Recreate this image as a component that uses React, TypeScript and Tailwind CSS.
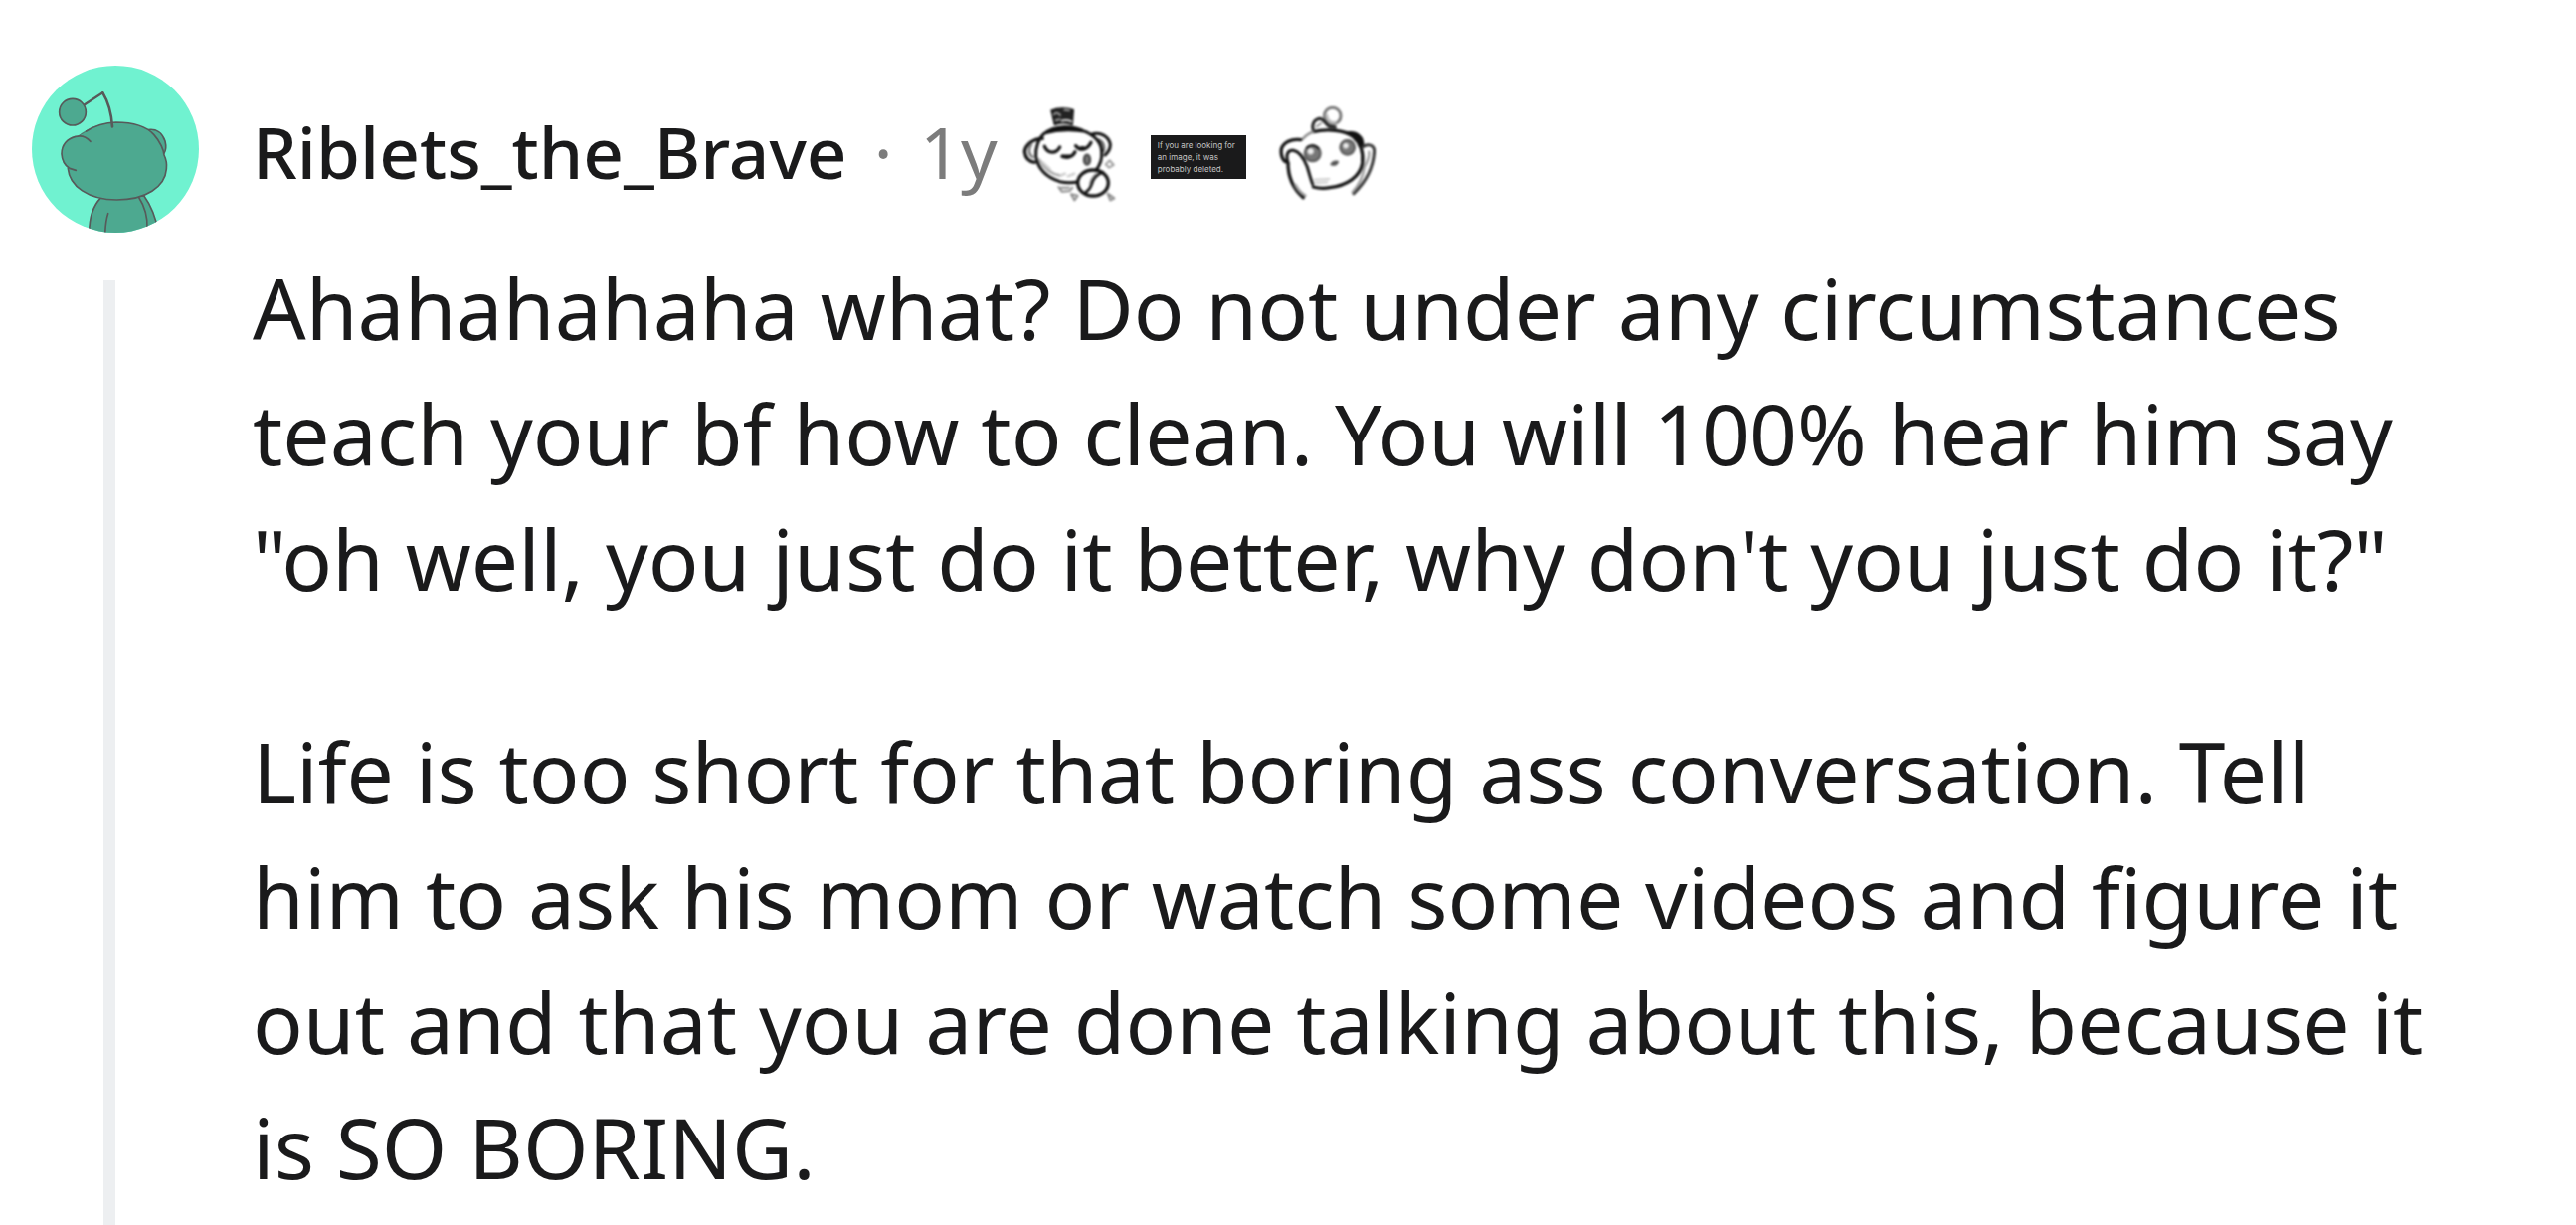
import type { ReactNode } from 'react';

const paragraphs = [
  'Ahahahahaha what? Do not under any circumstances teach your bf how to clean. You will 100% hear him say "oh well, you just do it better, why don\'t you just do it?"',
  'Life is too short for that boring ass conversation. Tell him to ask his mom or watch some videos and figure it out and that you are done talking about this, because it is SO BORING.',
];

function Avatar() {
  return (
    <svg viewBox="36 48 504 504" className="size-[168px] rounded-full" role="img" aria-label="Avatar">
      <rect x="36" y="48" width="504" height="504" fill="#70f2d0" />
      <g fill="#4da990" stroke="#575a5a" strokeWidth="5" strokeLinecap="round" strokeLinejoin="round">
        {/* body */}
        <path d="M243 448C222 470 208 500 209 560H420C412 512 396 470 374 440Z" />
        <path d="M266 494C260 512 258 530 257 556" fill="none" />
        <path d="M358 444C376 472 386 500 384 540" fill="none" />
        {/* ear behind the head */}
        <path d="M384 242C412 236 430 252 438 276C442 292 440 306 434 314Z" />
        {/* head */}
        <path
          d="M176 260C206 234 246 220 290 219C340 219 382 232 404 256C424 278 434 304 435 318C442 332 444 344 442 360C438 414 380 453 292 453C206 453 150 412 145 358C132 348 124 330 126 308C130 280 150 262 176 260Z"
          stroke="none"
        />
        <path
          d="M200 246C228 228 258 220 290 219C340 219 382 232 404 256C424 278 434 304 435 318C442 332 444 344 442 360C438 414 380 453 292 453C206 453 150 412 145 358"
          fill="none"
        />
        <path d="M176 260L200 246" fill="none" strokeWidth="2" />
        <path d="M213 277C200 262 184 258 168 262C142 268 126 288 126 314C127 336 138 350 150 358L169 364" fill="none" />
        {/* antenna */}
        <path d="M195 166L250 130" fill="none" strokeWidth="7" />
        <path d="M250 130C266 156 276 188 279 232" fill="none" strokeWidth="8" />
        <circle cx="159" cy="188" r="40" />
      </g>
    </svg>
  );
}

// Emoji are soft pencil sketches, hence the slight blur
function Emoji({ label, children }: { label: string; children: ReactNode }) {
  return (
    <svg
      viewBox="30 33 294 294"
      className="size-[98px] shrink-0 blur-[1px]"
      role="img"
      aria-label={label}
      fill="none"
      stroke="#111"
      strokeWidth="9"
      strokeLinecap="round"
      strokeLinejoin="round"
    >
      {children}
    </svg>
  );
}

function TopHatSnoo() {
  return (
    <Emoji label="Snoo in a top hat">
      {/* hat */}
      <path d="M120 45C140 37 168 37 187 44L184 88C166 82 146 82 130 89Z" fill="#222" strokeWidth="4" />
      <path d="M128 58C136 50 142 54 147 60M160 44L174 46M134 76L146 73" stroke="#999" strokeWidth="6" />
      <path d="M152 77C162 73 172 75 181 79" stroke="#ddd" strokeWidth="6" />
      <path d="M98 115C128 90 186 86 224 110C182 102 138 104 98 115Z" fill="#111" strokeWidth="7" />
      {/* ears */}
      <path d="M94 130C66 130 42 148 40 170C42 188 52 200 70 202" strokeWidth="10" />
      <path d="M60 148C50 162 52 178 64 186" stroke="#777" strokeWidth="8" />
      <path d="M240 118C268 108 294 124 298 148C298 162 292 172 282 180" />
      <path d="M264 134C276 140 282 154 278 168" stroke="#666" strokeWidth="8" />
      {/* face */}
      <path d="M98 116C82 130 72 158 74 184C80 222 108 248 146 260C166 264 184 264 202 260" />
      <path d="M224 110C254 124 272 146 272 172C274 196 266 212 254 226" />
      <path d="M84 194C98 220 122 238 148 242" stroke="#aaa" strokeWidth="8" />
      <path d="M94 202L116 222M148 242L162 236M170 244L190 236" stroke="#ccc" strokeWidth="7" />
      <path d="M100 154C110 176 134 178 146 156" strokeWidth="10" />
      <path d="M194 152C206 168 228 166 240 142M204 160L216 158" strokeWidth="10" />
      <path d="M154 184C168 190 184 186 192 170" strokeWidth="10" />
      <path d="M154 184L176 184" strokeWidth="11" />
      <ellipse cx="228" cy="194" rx="9" ry="15" fill="#777" stroke="#444" strokeWidth="7" />
      {/* coin */}
      <ellipse cx="246" cy="264" rx="46" ry="39" fill="#fff" strokeWidth="10" />
      <path d="M276 232C254 240 246 252 242 268C238 280 230 288 224 292" strokeWidth="8" />
      <path d="M256 236C242 246 238 258 236 268" stroke="#888" strokeWidth="4" />
      {/* crumbs */}
      <path d="M142 276L152 290L176 288L184 278M150 278L174 278" stroke="#888" strokeWidth="6" />
      <path d="M180 298L200 302L190 316Z" stroke="#888" strokeWidth="6" />
      <path d="M296 196L308 210L294 218L284 208Z" stroke="#999" strokeWidth="6" />
      <path d="M290 296L310 310L298 316Z" stroke="#888" strokeWidth="6" />
    </Emoji>
  );
}

function CheerSnoo() {
  return (
    <Emoji label="Snoo with raised arms">
      {/* antenna */}
      <circle cx="194" cy="62" r="25" stroke="#777" />
      <path d="M176 60C178 76 188 84 202 82" stroke="#bbb" />
      <path d="M136 106C130 86 140 72 156 70C168 72 172 86 184 94L202 96" stroke="#222" />
      <path d="M146 94L160 84" stroke="#999" strokeWidth="6" />
      {/* head */}
      <path d="M136 110C176 100 230 104 256 124C278 144 288 168 284 204C278 246 236 272 186 278C166 282 150 280 136 276" strokeWidth="10" />
      <path d="M104 132C114 120 124 114 136 110" stroke="#888" strokeWidth="7" />
      <path d="M240 114C266 110 286 126 284 152M256 120C268 126 276 138 276 150" strokeWidth="10" />
      <path d="M140 254L184 252M142 264L178 262" stroke="#ccc" strokeWidth="6" />
      {/* eyes */}
      <circle cx="134" cy="175" r="24" fill="#777" stroke="#555" strokeWidth="6" />
      <circle cx="128" cy="169" r="9" fill="#eee" stroke="#ccc" strokeWidth="3" />
      <path d="M116 158C124 148 142 148 152 160" strokeWidth="6" />
      <circle cx="239" cy="157" r="22" fill="#777" stroke="#555" strokeWidth="6" />
      <circle cx="234" cy="152" r="8" fill="#eee" stroke="#ccc" strokeWidth="3" />
      <path d="M190 208C194 200 204 198 210 200C208 208 200 212 190 208Z" fill="#555" stroke="#555" strokeWidth="6" />
      {/* left arm */}
      <path d="M98 134C70 130 46 142 40 162C38 178 42 192 52 200" strokeWidth="10" />
      <path d="M60 204C52 178 60 164 76 166C96 170 108 190 118 216C124 236 128 252 134 268" />
      <path d="M60 204C60 244 76 282 106 308" strokeWidth="10" />
      <path d="M82 270C90 284 100 296 112 302" stroke="#999" strokeWidth="8" />
      {/* right arm */}
      <path d="M284 156C302 144 318 150 320 166C318 216 294 262 258 296" stroke="#333" />
      <path d="M304 170C306 184 298 202 290 216C286 244 272 272 254 292" stroke="#999" strokeWidth="7" />
    </Emoji>
  );
}

function DeletedImage() {
  return (
    <div className="mt-1 h-11 w-24 shrink-0 bg-[#1a1a1b] pt-1 pl-[7px] font-['Inter',sans-serif] text-[8px] leading-[12px] whitespace-nowrap text-[#c4c4c4]">
      If you are looking for
      <br />
      an image, it was
      <br />
      probably deleted.
    </div>
  );
}

export default function App() {
  return (
    <article className="grid grid-cols-[168px_1fr] gap-x-[54px] gap-y-[13px] bg-white pt-[66px] pr-[120px] pl-8 font-['Noto_Sans',sans-serif] text-[#1a1a1b]">
      <Avatar />
      <header className="flex items-center gap-6 pt-3">
        <div className="flex items-baseline gap-[27px] pb-2 text-[72px] leading-[108px] whitespace-nowrap">
          <a href="#author" className="text-[71px] font-medium">
            Riblets_the_Brave
          </a>
          <span className="text-[#7c7c7c]">·</span>
          <time className="text-[#7c7c7c]">1y</time>
        </div>
        <div className="flex items-center gap-8">
          <TopHatSnoo />
          <DeletedImage />
          <CheerSnoo />
        </div>
      </header>

      {/* thread line */}
      <div className="mt-[35px] ml-[72px] w-3 bg-[#edeff1]" />
      <div className="space-y-[88px] pb-[15px] text-[84px] leading-[126px]">
        {paragraphs.map((text) => (
          <p key={text}>{text}</p>
        ))}
      </div>
    </article>
  );
}
